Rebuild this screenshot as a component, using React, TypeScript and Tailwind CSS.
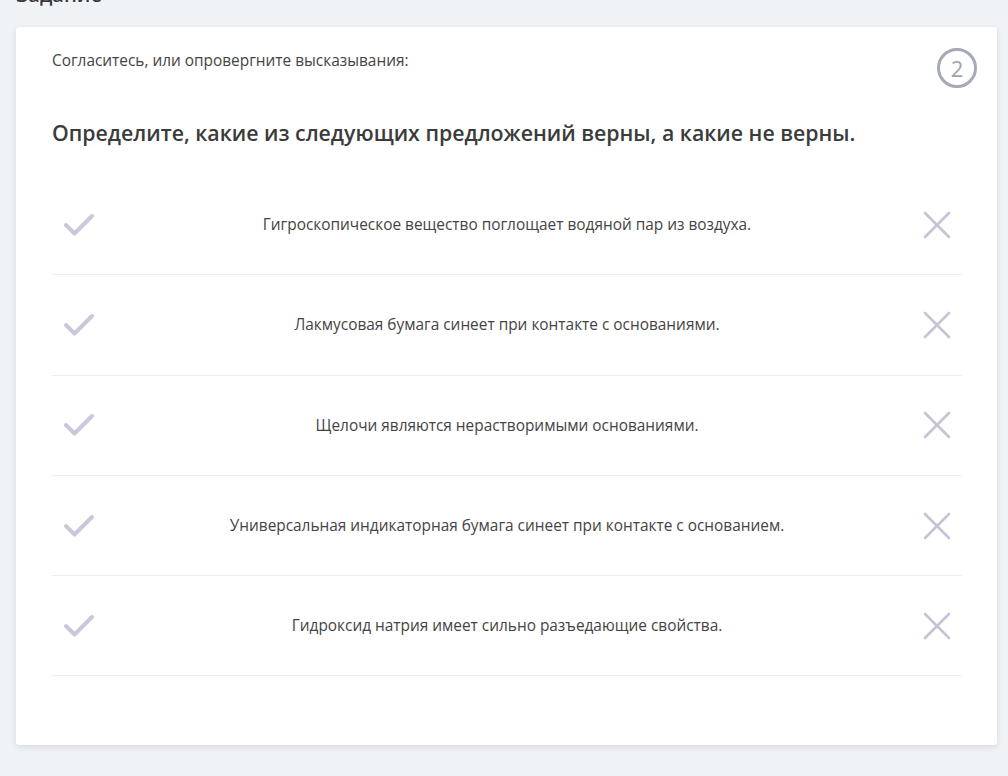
import React from 'react';

const statements = [
  'Гигроскопическое вещество поглощает водяной пар из воздуха.',
  'Лакмусовая бумага синеет при контакте с основаниями.',
  'Щелочи являются нерастворимыми основаниями.',
  'Универсальная индикаторная бумага синеет при контакте с основанием.',
  'Гидроксид натрия имеет сильно разъедающие свойства.',
];

function CheckIcon() {
  return (
    <svg width="32" height="24" viewBox="0 0 32 24" fill="none">
      <path d="M3 12 L11.5 20.5 L29 3" stroke="#cbc6da" strokeWidth="4" strokeLinecap="round" strokeLinejoin="round" />
    </svg>
  );
}

function CrossIcon() {
  return (
    <svg width="30" height="28" viewBox="0 0 30 28" fill="none">
      <path d="M3 2 L27 26 M27 2 L3 26" stroke="#c6c3d6" strokeWidth="2.6" strokeLinecap="round" />
    </svg>
  );
}

export default function App() {
  return (
    <div className="min-h-[776px] bg-[#f0f3f6] pl-4 pr-[11px] overflow-hidden" style={{ fontFamily: '"Open Sans", "Noto Sans", sans-serif' }}>
      <h2 className="-mt-[19px] h-[28px] text-[20px] leading-[28px] font-semibold text-[#3a3a3a]">Задание</h2>
      <div className="mt-[18px] relative bg-white rounded-[3px] shadow-[0_2px_6px_rgba(30,40,60,0.12)] pl-9 pr-[35px] pt-6 pb-[69px]">
        <div className="absolute right-5 top-[21px] w-10 h-10 rounded-full border-[3px] border-[#a5aab6] flex items-center justify-center text-[22px] leading-none text-[#9ea3b0]">
          2
        </div>
        <p className="text-[15.4px] leading-5 text-[#444]">Согласитесь, или опровергните высказывания:</p>
        <h1 className="mt-[47px] text-[21.3px] leading-[30px] font-semibold text-[#3b3b3b]">
          Определите, какие из следующих предложений верны, а какие не верны.
        </h1>
        <div className="mt-[27px]">
          {statements.map((s) => (
            <div key={s} className="h-[100.3px] flex items-center border-b border-[#eeeff1]">
              <div className="w-[60px] flex items-center pl-[11px]">
                <CheckIcon />
              </div>
              <div className="flex-1 text-center text-[15.4px] text-[#444]">{s}</div>
              <div className="w-[60px] flex items-center justify-end pr-[10px]">
                <CrossIcon />
              </div>
            </div>
          ))}
        </div>
      </div>
    </div>
  );
}
